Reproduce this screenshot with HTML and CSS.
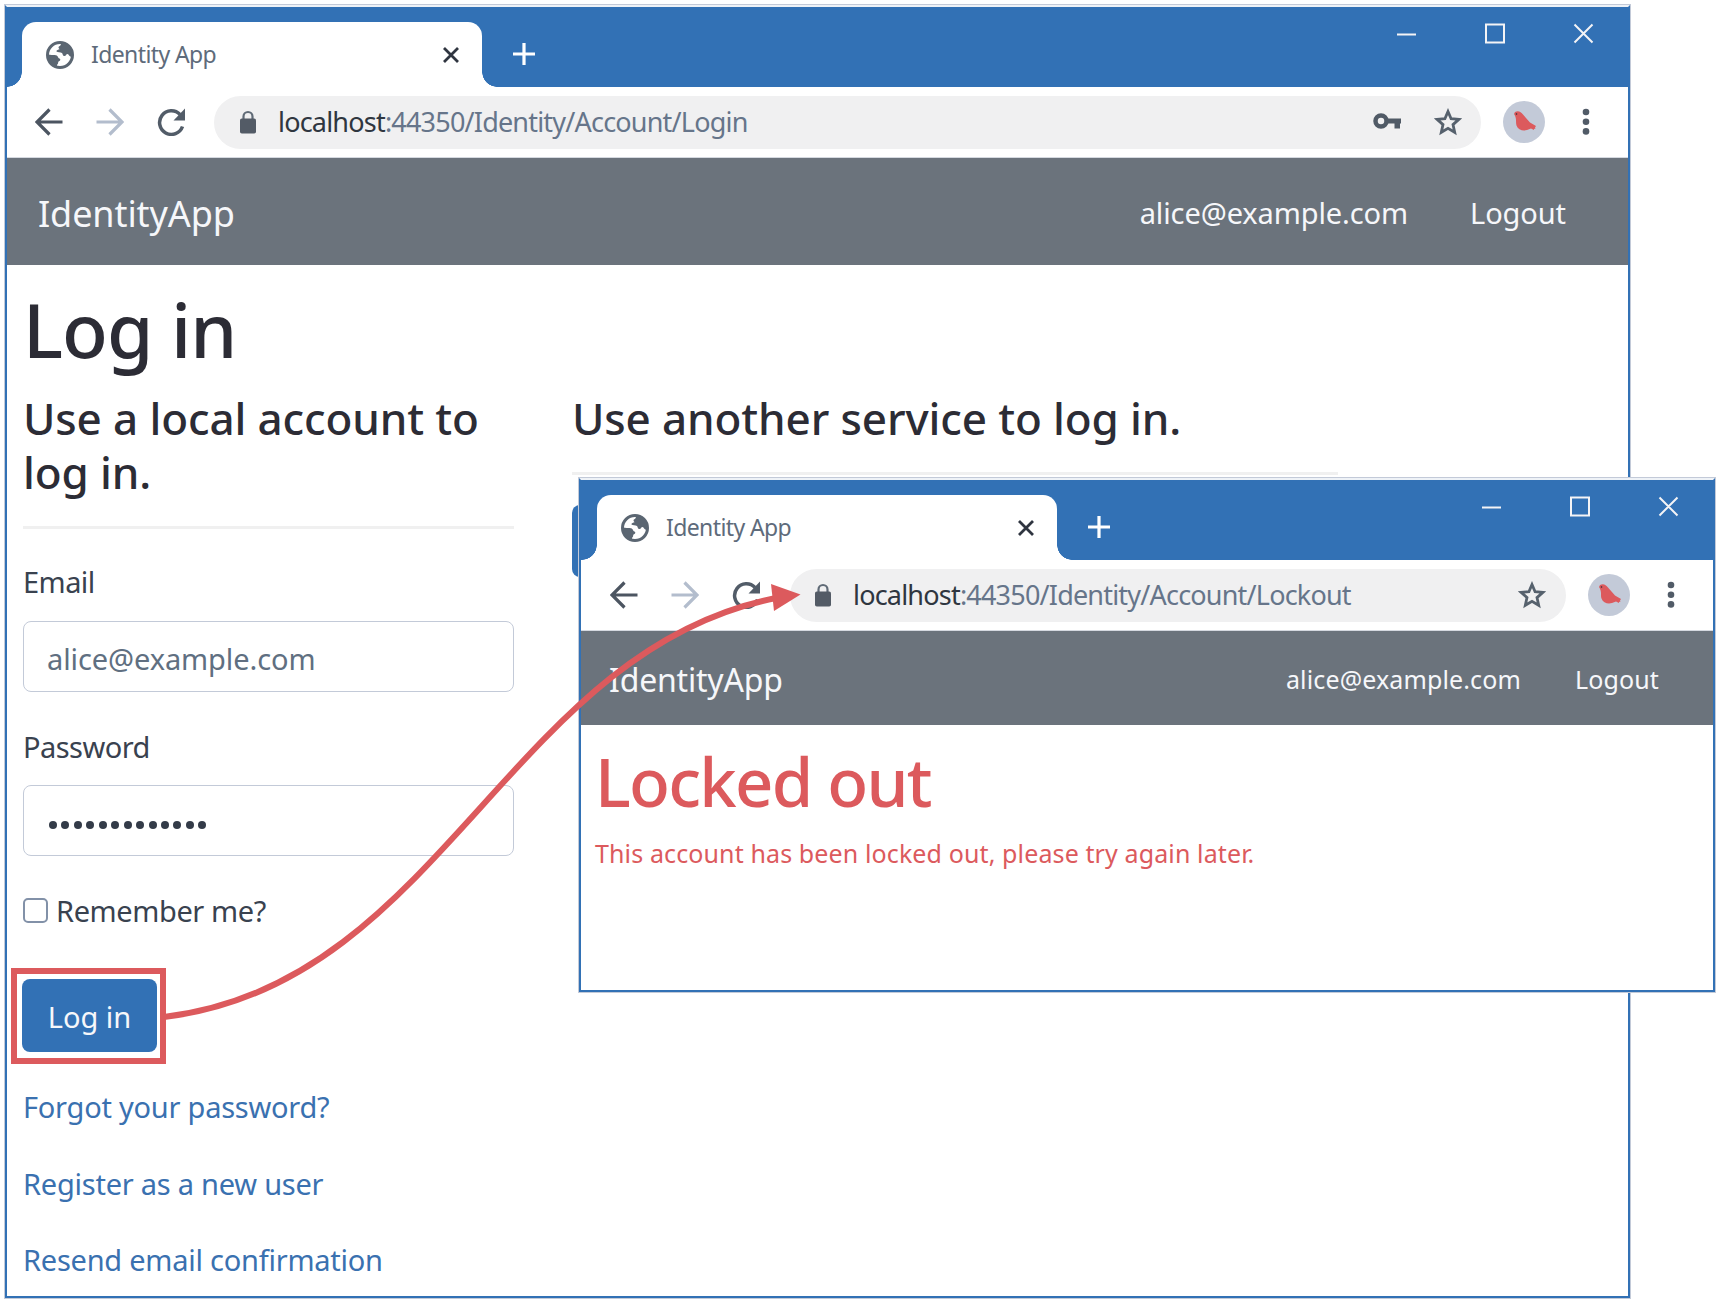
FILE: index.html
```html
<!DOCTYPE html>
<html lang="en">
<head>
<meta charset="utf-8">
<title>Identity App</title>
<link rel="stylesheet" href="styles.css">
</head>
<body>
<svg class="defs" aria-hidden="true">
  <symbol id="globe" viewBox="0 0 28 28"><circle cx="14" cy="14" r="12.500" fill="#fff" stroke="#5b6672" stroke-width="3"/><path fill="#5b6672" d="M15.500 2c-1 1.500-.5 2.500-2.500 3.500-1 .7-.3 2 .5 2.500-1 1.200-3.200.8-3 2.500 1 1.200 4 .2 5.500 1.500 1 1 .5 3 2.500 3 1.700 0 1.500-2 3-2 1.500.2 1.500 2.500 4 3C28 10 24 2.500 15.500 2z"/><path fill="#5b6672" d="M2 13.500c3 .8 5.500 0 8 .7 2.300.6 1.500 2.500 3.500 3.300 1.500.8.8 2.300-.5 2.700-1.500.6-.3 2.300-1.500 3-.8.5-.5 2-.3 3C6 25 2 20 2 13.500z"/></symbol>
  <symbol id="close" viewBox="0 0 16 16"><path d="M1 1l14 14M15 1L1 15" stroke="#2f3540" stroke-width="2.800"/></symbol>
  <symbol id="plus" viewBox="0 0 24 24"><path d="M12 1v22M1 12h22" stroke="#fff" stroke-width="3.200"/></symbol>
  <symbol id="back" viewBox="0 0 28 28"><path d="M27.500 14H3M14.500 1.500L2 14l12.500 12.500" fill="none" stroke="currentColor" stroke-width="3.200"/></symbol>
  <symbol id="reload" viewBox="0 0 28 28"><path d="M25.500 18.500A11.800 11.800 0 1 1 23 6.500" fill="none" stroke="#525c68" stroke-width="3.500"/><path d="M28 .5V12.500H16.500z" fill="#525c68"/></symbol>
  <symbol id="lock" viewBox="0 0 16 24"><path d="M3.500 10V6.500a4.500 4.500 0 0 1 9 0V10" fill="none" stroke="#606b77" stroke-width="2.200"/><rect y="8.500" width="16" height="15" rx="1.800" fill="#535b66"/></symbol>
  <symbol id="key" viewBox="0 0 28 16"><circle cx="8" cy="8" r="5.500" fill="none" stroke="#505a66" stroke-width="4.500"/><path d="M13 5.500h15v5h-1V15.500h-5.500v-5H13z" fill="#505a66"/></symbol>
  <symbol id="star" viewBox="0 0 28 28"><path d="M14 3.500l3.100 7.200 7.800.7-5.900 5.200 1.700 7.700-6.700-4-6.700 4L9 16.600l-5.900-5.200 7.800-.7z" fill="none" stroke="#56616d" stroke-width="2.800"/></symbol>
  <symbol id="dots" viewBox="0 0 8 28"><g fill="#515b67"><circle cx="4" cy="4" r="3.300"/><circle cx="4" cy="13.700" r="3.300"/><circle cx="4" cy="23.400" r="3.300"/></g></symbol>
  <symbol id="avatar" viewBox="0 0 42 42"><circle cx="21" cy="21" r="21" fill="#c3cad8"/><path d="M11 13l1-2c3-1.800 6-.5 8 2.500l7 8 6 3.500-1 1.500.5 1-1.500.5v1l-3-1.500-4 1.500c-4 1.200-9 0-10.500-4.500-1.200-3.500.8-6.500-2.500-11.500z" fill="#dc5a5d"/><circle cx="13.500" cy="13" r=".8" fill="#2c2c35"/></symbol>
  <symbol id="winbtns" viewBox="0 0 198 22"><path d="M1 11.500h19M90 1.500h18v18H90zM178.500 1.500l18 18M196.500 1.500l-18 18" fill="none" stroke="#f4f4f6" stroke-width="2"/></symbol>
</svg>

<main class="canvas">
  <section class="window window-login">
    <header class="tabstrip">
      <div class="tab">
        <svg class="i-globe"><use href="#globe"/></svg>
        <span class="tab-title">Identity App</span>
        <svg class="i-close"><use href="#close"/></svg>
      </div>
      <svg class="i-plus"><use href="#plus"/></svg>
      <svg class="i-win"><use href="#winbtns"/></svg>
    </header>
    <div class="toolbar">
      <svg class="i-nav"><use href="#back"/></svg>
      <svg class="i-nav i-fwd"><use href="#back"/></svg>
      <svg class="i-nav i-reload"><use href="#reload"/></svg>
      <div class="omnibox">
        <svg class="i-lock"><use href="#lock"/></svg>
        <span class="url"><b>localhost</b>:44350/Identity/Account/Login</span>
        <svg class="i-key"><use href="#key"/></svg>
        <svg class="i-star"><use href="#star"/></svg>
      </div>
      <svg class="i-avatar"><use href="#avatar"/></svg>
      <svg class="i-dots"><use href="#dots"/></svg>
    </div>
    <nav class="navbar">
      <span class="brand">IdentityApp</span>
      <span class="user">alice@example.com</span>
      <span class="logout">Logout</span>
    </nav>
    <div class="content">
      <h1 class="title">Log in</h1>
      <div class="columns">
        <form class="local">
          <h2 class="subtitle">Use a local account to<br>log in.</h2>
          <hr class="rule">
          <label class="label">Email</label>
          <div class="field">alice@example.com</div>
          <label class="label label-next">Password</label>
          <div class="field field-password"><i></i><i></i><i></i><i></i><i></i><i></i><i></i><i></i><i></i><i></i><i></i><i></i><i></i></div>
          <div class="remember"><span class="box"></span><span class="remember-text">Remember me?</span></div>
          <div class="submit">Log in</div>
          <div class="links">
            <a>Forgot your password?</a>
            <a>Register as a new user</a>
            <a>Resend email confirmation</a>
          </div>
        </form>
        <div class="external">
          <h2 class="subtitle">Use another service to log in.</h2>
          <hr class="rule">
          <div class="provider"></div>
        </div>
      </div>
    </div>
  </section>

  <section class="window window-lockout">
    <header class="tabstrip">
      <div class="tab">
        <svg class="i-globe"><use href="#globe"/></svg>
        <span class="tab-title">Identity App</span>
        <svg class="i-close"><use href="#close"/></svg>
      </div>
      <svg class="i-plus"><use href="#plus"/></svg>
      <svg class="i-win"><use href="#winbtns"/></svg>
    </header>
    <div class="toolbar">
      <svg class="i-nav"><use href="#back"/></svg>
      <svg class="i-nav i-fwd"><use href="#back"/></svg>
      <svg class="i-nav i-reload"><use href="#reload"/></svg>
      <div class="omnibox">
        <svg class="i-lock"><use href="#lock"/></svg>
        <span class="url"><b>localhost</b>:44350/Identity/Account/Lockout</span>
        <svg class="i-star"><use href="#star"/></svg>
      </div>
      <svg class="i-avatar"><use href="#avatar"/></svg>
      <svg class="i-dots"><use href="#dots"/></svg>
    </div>
    <nav class="navbar">
      <span class="brand">IdentityApp</span>
      <span class="user">alice@example.com</span>
      <span class="logout">Logout</span>
    </nav>
    <div class="content">
      <h1 class="title">Locked out</h1>
      <p class="message">This account has been locked out, please try again later.</p>
    </div>
  </section>

  <div class="highlight"></div>
  <svg class="arrow" viewBox="0 0 1719 1303"><path d="M164 1017C440 985 510 650 776 598" fill="none" stroke="#dc5a5d" stroke-width="6"/><path d="M771 584l29.500 10.500L774 611z" fill="#dc5a5d"/></svg>
</main>
</body>
</html>
```
FILE: styles.css
```css
* { box-sizing: border-box; }
body {
  margin: 0;
  background: #fff;
  font-family: "Noto Sans", "Open Sans", sans-serif;
  color: #39424f;
}
h1, h2, p, hr { margin: 0; }
svg { display: block; flex: none; }
.defs { position: absolute; width: 0; height: 0; }
.canvas { position: relative; width: 1719px; height: 1303px; overflow: hidden; }

/* browser windows */
.window {
  position: absolute;
  background: #fff;
  border: 2px solid #3271b5;
  border-top-color: #eef2f7;
  box-shadow: 0 0 0 1px #c3cad8;
}
.window-login { left: 5px; top: 5px; width: 1625px; height: 1293px; }
.window-lockout { left: 579px; top: 478px; width: 1136px; height: 514px; }

.tabstrip {
  display: flex;
  height: 80px;
  padding: 15px 34px 0 15px;
  background: #3271b5;
}
.tab {
  position: relative;
  display: flex;
  align-items: center;
  width: 460px;
  height: 65px;
  padding: 0 23px 0 24px;
  background: #fff;
  border-radius: 14px 14px 0 0;
}
.tab::before, .tab::after {
  content: "";
  position: absolute;
  bottom: 0;
  width: 15px;
  height: 15px;
}
.tab::before { left: -15px; background: radial-gradient(circle at 0 0, transparent 14.5px, #fff 15px); }
.tab::after { right: -15px; background: radial-gradient(circle at 100% 0, transparent 14.5px, #fff 15px); }
.tab-title { margin: 0 0 2px 17px; font-size: 23px; line-height: 30px; letter-spacing: -.6px; color: #5e6b7b; }
.i-globe { width: 28px; height: 28px; }
.i-close { width: 16px; height: 16px; margin-left: auto; }
.i-plus { width: 24px; height: 24px; margin: 20px 0 0 30px; }
.i-win { width: 198px; height: 22px; margin: 1px 0 0 auto; }

.toolbar {
  display: flex;
  align-items: center;
  height: 71px;
  padding: 0 38px 0 28px;
  border-bottom: 1px solid #d5d9e0;
}
.i-nav { width: 28px; height: 28px; margin-right: 33px; color: #4c5561; }
.i-fwd { color: #b3bdcd; transform: scaleX(-1); }
.i-reload { margin-right: 29px; }
.omnibox {
  display: flex;
  align-items: center;
  flex: 1;
  height: 53px;
  padding: 0 19px 0 26px;
  background: #f0f0f1;
  border-radius: 27px;
}
.i-lock { width: 16px; height: 24px; }
.url { margin-left: 22px; font-size: 27px; line-height: 40px; letter-spacing: -.8px; color: #66758a; white-space: nowrap; }
.url b { font-weight: 400; color: #2f3640; }
.i-key { width: 28px; height: 16px; margin: 0 0 2px auto; }
.i-star { width: 28px; height: 28px; margin-left: 33px; }
.i-avatar { width: 42px; height: 42px; margin: 0 37px 0 22px; }
.i-dots { width: 8px; height: 28px; }

.navbar {
  display: flex;
  align-items: center;
  height: 107px;
  padding: 3px 62px 0 31px;
  background: #6b737c;
  color: #f6f7fa;
}
.brand { font-size: 36px; margin-right: auto; letter-spacing: -.1px; }
.user, .logout { margin-bottom: 2px; font-size: 29px; letter-spacing: -.1px; }
.logout { margin-left: 62px; }

/* login page */
.content { padding: 20px 16px 0; }
.title { font-size: 75px; font-weight: 500; line-height: 88px; letter-spacing: -1px; color: #2c2c35; }
.columns { display: flex; gap: 58px; padding-top: 18px; }
.local { width: 491px; }
.external { width: 766px; }
.subtitle { font-size: 44px; font-weight: 500; line-height: 54px; letter-spacing: -.12px; color: #2c2c35; white-space: nowrap; }
.rule { height: 3px; margin-top: 27px; border: 0; background: #f0f0f0; }
.label { display: block; margin-top: 31px; font-size: 29px; line-height: 44px; letter-spacing: -.55px; }
.label-next { margin-top: 33px; }
.field {
  display: flex;
  align-items: center;
  height: 71px;
  margin-top: 17px;
  padding: 3px 23px 0;
  border: 1.500px solid #c3cad8;
  border-radius: 8px;
  font-size: 29px;
  letter-spacing: -.1px;
  color: #606f81;
}
.label-next + .field { margin-top: 16px; }
.field-password { gap: 4.450px; padding: 8px 0 0 25px; }
.field-password i { width: 8px; height: 8px; border-radius: 50%; background: #333b48; }
.remember { display: flex; align-items: center; gap: 8px; margin-top: 32px; font-size: 29px; line-height: 44px; letter-spacing: -.4px; }
.remember-text { padding-top: 1px; margin-bottom: -1px; }
.box { width: 25px; height: 25px; border: 2px solid #8291a8; border-radius: 5px; }
.submit {
  width: 135px;
  height: 73px;
  margin: 47px 0 0 -1px;
  border-radius: 8px;
  background: #3271b5;
  color: #f6f7fa;
  font-size: 29px;
  line-height: 75px;
  text-align: center;
}
.links { display: flex; flex-direction: column; gap: 32.500px; margin-top: 33px; font-size: 29px; line-height: 44px; letter-spacing: -.24px; color: #3a71b0; }
.provider { width: 200px; height: 72px; margin-top: 30px; border-radius: 8px; background: #3271b5; }

/* lockout page */
.window-lockout .tabstrip { padding-left: 16px; }
.window-lockout .toolbar { padding-left: 29px; }
.window-lockout .i-reload { margin-right: 30px; }
.window-lockout .omnibox { padding: 0 20px 0 25px; }
.window-lockout .navbar { height: 94px; padding: 3px 54px 0 28px; }
.window-lockout .brand { font-size: 32px; letter-spacing: -.2px; }
.window-lockout .user, .window-lockout .logout { font-size: 25px; letter-spacing: .13px; }
.window-lockout .logout { margin-left: 54px; }
.window-lockout .i-star { margin-left: auto; }
.window-lockout .content { padding: 16px 14px 0; }
.window-lockout .title { font-size: 67px; line-height: 80px; letter-spacing: -1.750px; color: #dc5a5d; }
.message { margin-top: 13px; font-size: 25px; line-height: 38px; letter-spacing: .12px; color: #dc5a5d; }

/* annotations */
.highlight { position: absolute; left: 11px; top: 968px; width: 155px; height: 96px; border: 6px solid #dc5a5d; }
.arrow { position: absolute; left: 0; top: 0; width: 1719px; height: 1303px; pointer-events: none; }
```
